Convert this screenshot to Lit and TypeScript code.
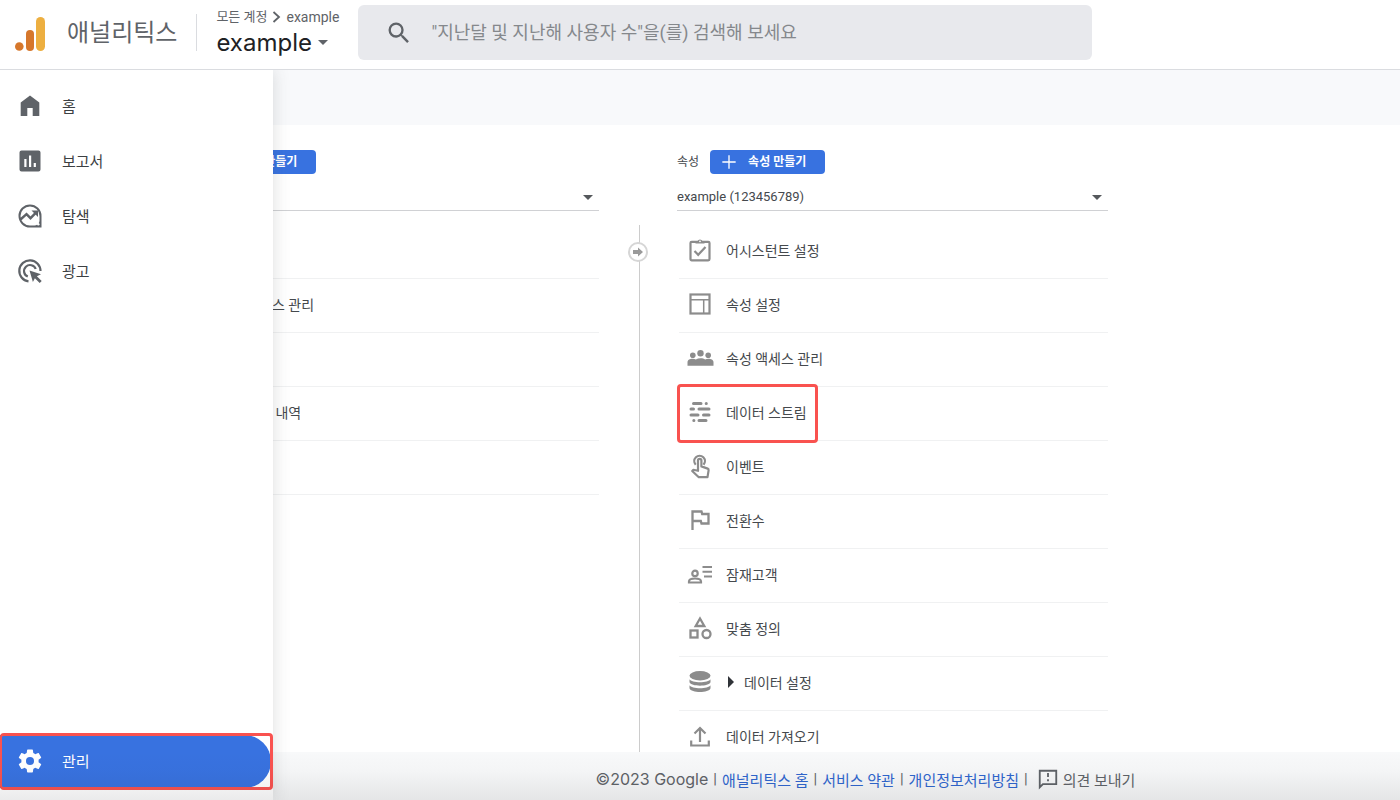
import { LitElement, html, css, svg, nothing } from 'lit';
import type { SVGTemplateResult } from 'lit';
import { customElement, property } from 'lit/decorators.js';
import { classMap } from 'lit/directives/class-map.js';

interface AdminRow {
  label: string;
  icon: string;
  expandable?: boolean;
  marked?: boolean;
}

const ICONS: Record<string, SVGTemplateResult> = {
  home: svg`<path d="M12 1.500 2.700 8.600V22h6.600v-8h5.400v8h6.600V8.600z"/>`,
  reports: svg`<path fill-rule="evenodd" d="M3.500 1.500h17a2 2 0 0 1 2 2v17a2 2 0 0 1-2 2h-17a2 2 0 0 1-2-2v-17a2 2 0 0 1 2-2zM6.300 10v8h2.200v-8zM11 6.500V18h2.200V6.500zM15.700 14v4h2.200v-4z"/>`,
  explore: svg`
    <path fill="none" stroke="currentColor" stroke-width="2" d="M12 1.500a10.500 10.500 0 1 0 0 21h10.500V12A10.500 10.500 0 0 0 12 1.500z"/>
    <path fill="none" stroke="currentColor" stroke-width="2.400" d="m2.500 15.500 6-5.300 4 4 6-6"/>
    <path d="M13.500 6.500h6.500V13z"/>
    <path d="M22.500 15.500v7h-7c3.500-1 6-3.500 7-7z"/>
    <circle cx="20.300" cy="20.300" r="1.200" fill="#fff"/>`,
  ads: svg`
    <path fill="none" stroke="currentColor" stroke-width="2.200" d="M10.500 22.400A10.600 10.600 0 1 1 22.500 12"/>
    <path fill="none" stroke="currentColor" stroke-width="2.200" d="M9.800 17.600A6 6 0 1 1 17.700 10"/>
    <path d="m11.500 11.500 11.500 3.800-4.100 2 4.800 4.800-2 2-4.800-4.800-2 3.700z"/>`,
  gear: svg`<path d="M19.430 12.980c.04-.32.07-.64.07-.98s-.03-.66-.07-.98l2.110-1.650c.19-.15.24-.42.12-.64l-2-3.460c-.12-.22-.39-.3-.61-.22l-2.490 1c-.52-.4-1.080-.73-1.690-.98l-.38-2.650C14.460 2.180 14.250 2 14 2h-4c-.25 0-.46.18-.49.42l-.38 2.650c-.61.25-1.170.59-1.690.98l-2.490-1c-.23-.09-.49 0-.61.22l-2 3.460c-.13.22-.07.49.12.64l2.110 1.650c-.04.32-.07.65-.07.98s.03.66.07.98l-2.110 1.650c-.19.15-.24.42-.12.64l2 3.460c.12.22.39.3.61.22l2.490-1c.52.4 1.080.73 1.690.98l.38 2.650c.03.24.24.42.49.42h4c.25 0 .46-.18.49-.42l.38-2.650c.61-.25 1.170-.59 1.690-.98l2.490 1c.23.09.49 0 .61-.22l2-3.460c.12-.22.07-.49-.12-.64zM12 15.500a3.500 3.500 0 1 1 0-7 3.500 3.500 0 0 1 0 7z" transform="translate(-1.800 -1.800) scale(1.150)"/>`,
  search: svg`<path d="M15.500 14h-.79l-.28-.27A6.471 6.471 0 0 0 16 9.500 6.500 6.500 0 1 0 9.500 16c1.610 0 3.090-.59 4.230-1.570l.27.28v.79l5 4.990L20.490 19zm-6 0a4.500 4.500 0 1 1 0-9 4.500 4.500 0 0 1 0 9z"/>`,
  assistant: svg`
    <rect x="2.500" y="3.800" width="19" height="18.500" rx="1.200" fill="none" stroke="currentColor" stroke-width="2.200"/>
    <path d="M7.500 5.500V3H9.600a2.600 2.600 0 0 1 4.800 0h2.100v2.500z"/>
    <circle cx="12" cy="3.300" r=".9" fill="#fff"/>
    <path fill="none" stroke="currentColor" stroke-width="2.200" d="m6.500 13 3.700 3.800 7.300-7.800"/>`,
  layout: svg`
    <rect x="2.500" y="2.500" width="19" height="19" fill="none" stroke="currentColor" stroke-width="2.200"/>
    <path fill="none" stroke="currentColor" stroke-width="1.500" d="M3 7.700h18M15.700 7.700V21"/>`,
  people: svg`
    <circle cx="12.500" cy="7.300" r="3.200"/><circle cx="4.800" cy="9.200" r="2.800"/><circle cx="20.200" cy="9.200" r="2.800"/>
    <path d="M-.5 19.800v-3.500c0-2.600 3-3.700 5.500-3.500 1 0 2 .3 2.800.6 2.800-1.500 7-1.500 9.400 0 2.800-1.200 8.300-.7 8.300 2.900v3.500z"/>`,
  streams: svg`<path fill="none" stroke="currentColor" stroke-width="3" stroke-linecap="round" d="M5.500 3.500h7.500M18.200 3.500h.1M3 9.100h2.500M11 9.100h10M3 14.900h7M15.500 14.900H21M5.800 20.500h.1M11 20.500h7"/>`,
  touch: svg`
    <path fill="none" stroke="currentColor" stroke-width="2.200" d="M7.700 10.700a5.300 5.300 0 1 1 7.800 0"/>
    <path fill="none" stroke="currentColor" stroke-width="2.200" stroke-linejoin="round" d="M10 16.800V6.600a1.700 1.700 0 0 1 3.400 0v5.800l6.300 2.200c.8.300 1 .9.900 1.700l-1.100 6.900h-8.700L4.200 17l1.200-1.200z"/>`,
  flag: svg`<path fill="none" stroke="currentColor" stroke-width="2.300" d="M4.500 22V3.500h9l.7 2.500h6.300v9.500h-7l-.7-2.500H4.500"/>`,
  audience: svg`
    <circle cx="7" cy="11.400" r="2.700" fill="none" stroke="currentColor" stroke-width="2.200"/>
    <path fill="none" stroke="currentColor" stroke-width="2.200" d="M1 20.500v-1c0-4 12-4 12 0v1z"/>
    <path d="M14.500 4H24v2.100h-9.500zM14.500 8.700H24v2.100h-9.500zM16 13.400h8v2.100h-8z"/>`,
  shapes: svg`<g fill="none" stroke="currentColor" stroke-width="2.300"><path d="m12 2.500 4.300 7.500H7.700z"/><rect x="2.500" y="14.500" width="7" height="7"/><circle cx="18.500" cy="18" r="4"/></g>`,
  database: svg`
    <ellipse cx="12" cy="5.700" rx="10.500" ry="4.700"/>
    <path d="M1.500 9.300c2 4 19 4 21 0v3c-1.500 4.500-19.500 4.500-21 0z"/>
    <path d="M1.500 15.300c2 4 19 4 21 0v3c-1.500 5-19.500 5-21 0z"/>`,
  upload: svg`<path fill="none" stroke="currentColor" stroke-width="2.200" d="M3.200 16.500v5h17.600v-5M12 18V5M6.500 9.500 12 4l5.500 5.500"/>`,
  feedback: svg`
    <path fill="none" stroke="currentColor" stroke-width="2" d="M3 3h18v14.500H6.500L3 21z"/>
    <path d="M11 5.500h2v4.300h-2zM11 12.300h2v2.200h-2z"/>`,
  plus: svg`<path d="M11 2h2v9h9v2h-9v9h-2v-9H2v-2h9z"/>`,
};

const NAV_ITEMS = [
  { label: '홈', icon: 'home' },
  { label: '보고서', icon: 'reports' },
  { label: '탐색', icon: 'explore' },
  { label: '광고', icon: 'ads' },
];

const ACCOUNT_ROWS: AdminRow[] = [
  { label: '계정 설정', icon: 'layout' },
  { label: '계정 액세스 관리', icon: 'people' },
  { label: '모든 필터', icon: 'streams' },
  { label: '계정 변경 내역', icon: 'assistant' },
  { label: '휴지통', icon: 'database' },
];

const PROPERTY_ROWS: AdminRow[] = [
  { label: '어시스턴트 설정', icon: 'assistant' },
  { label: '속성 설정', icon: 'layout' },
  { label: '속성 액세스 관리', icon: 'people' },
  { label: '데이터 스트림', icon: 'streams', marked: true },
  { label: '이벤트', icon: 'touch' },
  { label: '전환수', icon: 'flag' },
  { label: '잠재고객', icon: 'audience' },
  { label: '맞춤 정의', icon: 'shapes' },
  { label: '데이터 설정', icon: 'database', expandable: true },
  { label: '데이터 가져오기', icon: 'upload' },
];

@customElement('ga-icon')
export class GaIcon extends LitElement {
  static styles = css`
    :host {
      display: block;
      flex: none;
      width: 24px;
      height: 24px;
    }

    svg {
      display: block;
      width: 100%;
      height: 100%;
      overflow: visible;
      fill: currentColor;
    }
  `;

  @property({ type: String })
  name = '';

  render() {
    return html`<svg viewBox="0 0 24 24" aria-hidden="true">${ICONS[this.name]}</svg>`;
  }
}

@customElement('ga-admin-column')
export class GaAdminColumn extends LitElement {
  static styles = css`
    :host {
      display: block;
      min-width: 0;
      color: #45494d;
    }

    .head {
      display: flex;
      align-items: center;
      gap: 11px;
      font-size: 12px;
      line-height: 24px;
    }

    .create {
      display: flex;
      align-items: center;
      gap: 11px;
      height: 24px;
      padding: 0 19px 0 11px;
      border: none;
      border-radius: 4px;
      background: #3872e0;
      color: #fff;
      font: inherit;
      font-weight: 700;
      white-space: nowrap;
      cursor: pointer;
    }

    .create ga-icon {
      width: 16px;
      height: 16px;
    }

    .picker {
      position: relative;
      margin-top: 8px;
    }

    .picker select {
      display: block;
      width: 100%;
      height: 29px;
      padding: 0;
      border: none;
      border-bottom: 1px solid #d0d1d4;
      border-radius: 0;
      appearance: none;
      background: transparent;
      color: inherit;
      font: inherit;
      font-size: 13px;
    }

    .picker::after {
      content: '';
      position: absolute;
      top: 13px;
      right: 6px;
      border: 5px solid transparent;
      border-top-color: #55585c;
      border-bottom: none;
      pointer-events: none;
    }

    ul {
      margin: 14px 0 0 2px;
      padding: 0;
      list-style: none;
    }

    li {
      display: flex;
      border-bottom: 1px solid #f0f1f2;
    }

    .row {
      position: relative;
      display: flex;
      align-items: center;
      gap: 14px;
      box-sizing: border-box;
      height: 53px;
      padding: 0 11px 3px 9px;
      color: inherit;
      font-size: 14px;
      text-decoration: none;
      white-space: nowrap;
    }

    .row ga-icon {
      color: #8c8c8c;
    }

    .row.marked::after {
      content: '';
      position: absolute;
      inset: -3px 0 -3px -2px;
      border: 3px solid #f9524f;
      border-radius: 4px;
    }

    .expander {
      margin: 0 -4px 0 2px;
      border: 6px solid transparent;
      border-left-color: #303338;
      border-right: none;
    }
  `;

  @property({ type: String })
  heading = '';

  @property({ type: String })
  selected = '';

  @property({ attribute: false })
  rows: AdminRow[] = [];

  render() {
    return html`
      <div class="head">
        <label for="picker">${this.heading}</label>
        <button class="create"><ga-icon name="plus"></ga-icon>${this.heading} 만들기</button>
      </div>
      <div class="picker">
        <select id="picker"><option>${this.selected}</option></select>
      </div>
      <ul>
        ${this.rows.map(row => html`
          <li>
            <a href="#" class=${classMap({ row: true, marked: !!row.marked })}>
              <ga-icon name=${row.icon}></ga-icon>
              ${row.expandable ? html`<span class="expander"></span>` : nothing}
              <span>${row.label}</span>
            </a>
          </li>
        `)}
      </ul>
    `;
  }
}

@customElement('app-root')
export class AppRoot extends LitElement {
  static styles = css`
    :host {
      position: relative;
      display: flex;
      flex-direction: column;
      height: 100vh;
      overflow: hidden;
      background: #fff;
      color: #5f6368;
      font-family: Roboto, 'Noto Sans CJK KR', sans-serif;
    }

    a {
      color: inherit;
      text-decoration: none;
    }

    header {
      display: flex;
      align-items: center;
      flex: none;
      height: 69px;
      border-bottom: 1px solid #dadce0;
    }

    .logo {
      flex: none;
      width: 32px;
      height: 36px;
      margin: 0 0 4px 15px;
    }

    .product {
      margin: 0 19px 4px 20px;
      font-size: 24px;
      line-height: 36px;
      white-space: nowrap;
    }

    .account {
      display: flex;
      align-items: center;
      height: 37px;
      padding-left: 19px;
      margin: 0 19px 4px 0;
      border-left: 1px solid #dadce0;
    }

    .crumbs {
      display: flex;
      align-items: center;
      gap: 5px;
      font-size: 13px;
      line-height: 20px;
      white-space: nowrap;
    }

    .crumbs svg {
      width: 9px;
      height: 12px;
    }

    .crumbs span + svg + span {
      font-size: 14px;
    }

    .switcher {
      display: flex;
      align-items: center;
      gap: 6px;
      padding: 0;
      border: none;
      background: none;
      color: #202124;
      font-family: Inter, sans-serif;
      font-size: 24px;
      line-height: 32px;
      cursor: pointer;
    }

    .switcher::after {
      content: '';
      border: 5px solid transparent;
      border-top-color: #5f6368;
      border-bottom: none;
    }

    .search {
      display: flex;
      align-items: center;
      flex: 1;
      gap: 18px;
      max-width: 707px;
      height: 55px;
      margin-bottom: 4px;
      padding-left: 27px;
      border-radius: 6px;
      background: #e8e9ed;
    }

    .search ga-icon {
      width: 28px;
      height: 28px;
    }

    .search input {
      flex: 1;
      min-width: 0;
      height: 40px;
      padding: 0;
      border: none;
      outline: none;
      background: transparent;
      font: inherit;
      font-size: 18px;
    }

    .search input::placeholder {
      color: #85888c;
    }

    .body {
      position: relative;
      display: flex;
      flex-direction: column;
      flex: 1;
      min-height: 0;
      overflow: hidden;
    }

    .band {
      flex: none;
      height: 55px;
      background: #f8f9fb;
    }

    main {
      display: grid;
      grid-template-columns: minmax(0, 431px) 78px minmax(0, 431px);
      flex: 1;
      min-height: 0;
      padding: 25px 0 0 168px;
      overflow: hidden auto;
      scrollbar-width: none;
    }

    .divider {
      position: relative;
      width: 1px;
      margin: 75px 0 0 40px;
      background: #ccc;
    }

    .move {
      position: absolute;
      top: 17px;
      left: -11px;
      width: 20px;
      height: 20px;
      padding: 0;
      border: 2px solid #d6d6d6;
      border-radius: 50%;
      background: #fff;
      color: #9a9a9a;
    }

    .move svg {
      display: block;
      width: 10px;
      height: 10px;
      margin: auto;
    }

    footer {
      display: flex;
      align-items: center;
      justify-content: center;
      flex: none;
      gap: 5px;
      box-sizing: border-box;
      height: 48px;
      padding: 6px 0 0 331px;
      background: #f8f9fa;
      font-size: 15px;
      white-space: nowrap;
    }

    footer .owner {
      font-family: Inter, sans-serif;
      font-size: 16px;
    }

    footer .link {
      color: #2f66cf;
    }

    footer .feedback {
      display: flex;
      align-items: center;
      gap: 4px;
      margin-left: 4px;
    }

    footer ga-icon {
      width: 22px;
      height: 22px;
    }

    nav {
      position: absolute;
      top: 0;
      bottom: 0;
      left: 0;
      display: flex;
      flex-direction: column;
      box-sizing: border-box;
      width: 273px;
      padding: 9px 0 12px;
      background: #fff;
      box-shadow: 0 0 16px rgba(60, 64, 67, 0.18);
      color: #3c4043;
      font-size: 15px;
    }

    .nav-item {
      display: flex;
      align-items: center;
      gap: 20px;
      box-sizing: border-box;
      height: 55px;
      padding: 0 0 2px 18px;
    }

    .nav-item ga-icon {
      color: #5f6368;
    }

    .nav-item.active {
      position: relative;
      height: 53px;
      margin: auto 2px 0 0;
      border-radius: 0 27px 27px 0;
      background: #3872e0;
      color: #fff;
    }

    .nav-item.active ga-icon {
      color: #fff;
    }

    .nav-item.active::after {
      content: '';
      position: absolute;
      inset: -2px -2px -2px 0;
      border: 3px solid #f9524f;
      border-left-width: 2px;
      border-radius: 4px;
    }

    .fade {
      position: absolute;
      right: 0;
      bottom: 0;
      left: 0;
      height: 48px;
      background: linear-gradient(transparent, rgba(32, 33, 36, 0.02) 40%, rgba(32, 33, 36, 0.09));
      pointer-events: none;
    }
  `;

  render() {
    return html`
      <header>
        <svg class="logo" viewBox="0 0 32 36" aria-hidden="true">
          <circle cx="4.300" cy="31.500" r="4.300" fill="#d6772b" />
          <rect x="11" y="15" width="8" height="21" rx="4" fill="#d6772b" />
          <rect x="21" y="2" width="9" height="34" rx="4.500" fill="#edaf40" />
        </svg>
        <span class="product">애널리틱스</span>
        <div class="account">
          <div>
            <div class="crumbs">
              <span>모든 계정</span>
              <svg viewBox="0 0 9 12" aria-hidden="true">
                <path d="M1.500 1 7 6l-5.500 5" fill="none" stroke="currentColor" stroke-width="1.800" />
              </svg>
              <span>example</span>
            </div>
            <button class="switcher">example</button>
          </div>
        </div>
        <div class="search">
          <ga-icon name="search"></ga-icon>
          <input
            type="text"
            aria-label="검색"
            placeholder='"지난달 및 지난해 사용자 수"을(를) 검색해 보세요'
          />
        </div>
      </header>
      <div class="body">
        <div class="band"></div>
        <main>
          <ga-admin-column heading="계정" .rows=${ACCOUNT_ROWS}></ga-admin-column>
          <div class="divider">
            <button class="move" aria-label="이동">
              <svg viewBox="0 0 10 10" aria-hidden="true">
                <path d="M0 3h5V.5L10 5 5 9.500V7H0z" fill="currentColor" />
              </svg>
            </button>
          </div>
          <ga-admin-column
            heading="속성"
            selected="example (123456789)"
            .rows=${PROPERTY_ROWS}
          ></ga-admin-column>
        </main>
        <footer>
          <span class="owner">©2023 Google</span>
          <span>|</span>
          <a class="link" href="#">애널리틱스 홈</a>
          <span>|</span>
          <a class="link" href="#">서비스 약관</a>
          <span>|</span>
          <a class="link" href="#">개인정보처리방침</a>
          <span>|</span>
          <a class="feedback" href="#"><ga-icon name="feedback"></ga-icon>의견 보내기</a>
        </footer>
        <nav>
          ${NAV_ITEMS.map(item => html`
            <a class="nav-item" href="#"><ga-icon name=${item.icon}></ga-icon>${item.label}</a>
          `)}
          <a class="nav-item active" href="#"><ga-icon name="gear"></ga-icon>관리</a>
        </nav>
        <div class="fade"></div>
      </div>
    `;
  }
}

declare global {
  interface HTMLElementTagNameMap {
    'ga-icon': GaIcon;
    'ga-admin-column': GaAdminColumn;
    'app-root': AppRoot;
  }
}
